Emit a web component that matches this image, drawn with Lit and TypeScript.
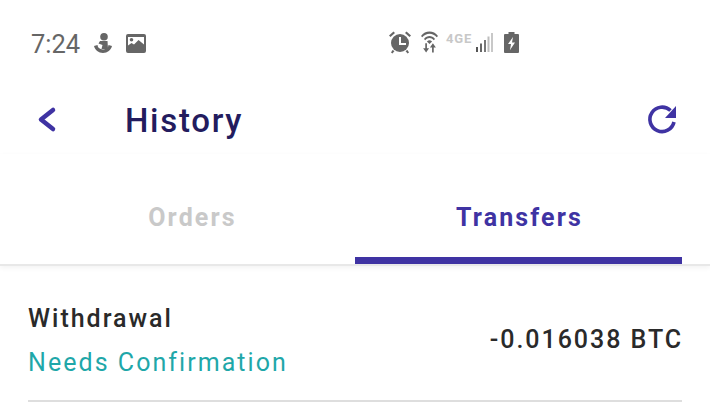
import { LitElement, html, css, unsafeCSS } from 'lit';
import { customElement, property } from 'lit/decorators.js';

const INDIGO = unsafeCSS('#3f33a3');

@customElement('status-bar')
export class StatusBar extends LitElement {
  static override styles = css`
    :host {
      display: flex;
      align-items: center;
      height: 86px;
      padding-left: 31px;
      color: #666;
      box-sizing: border-box;
    }
    .time {
      font: 400 25.5px/30px Roboto, sans-serif;
      width: 63px;
      padding-top: 1px;
    }
    svg {
      display: block;
      fill: currentColor;
    }
    .left {
      display: flex;
      align-items: center;
      gap: 14px;
    }
    .right {
      display: flex;
      align-items: center;
      margin: 0 0 2px 242px;
    }
    .wifi {
      margin: 0 0 2px 9px;
    }
    .net {
      font: 700 13px/12px Roboto, sans-serif;
      color: #c8c8c8;
      letter-spacing: 0.8px;
      width: 24px;
      margin: -6px 6px 0 8px;
    }
    .battery {
      margin-left: 11px;
    }
  `;

  override render() {
    return html`
      <span class="time">7:24</span>
      <div class="left">
        <svg width="18" height="20" viewBox="0 0 18 20">
          <circle cx="10" cy="3.800" r="3.800" />
          <path d="M6 8h7.500l.5 8H7.500l1-4-4-1.500z" />
          <path d="M0 13l3.500-1 .5 2c1 1.500 3 2.500 5 2.500s4-1 5-2.500l.5-2 3.500 1c-1 4-4.500 7-9 7s-8-3-9-7z" />
        </svg>
        <svg width="20" height="19" viewBox="0 0 20 19">
          <path fill-rule="evenodd" d="M2 0h16a2 2 0 0 1 2 2v15a2 2 0 0 1-2 2H2a2 2 0 0 1-2-2V2a2 2 0 0 1 2-2zm0 3v8.500l3.500-2.500 2.500 1.500 4.500-4.500 5.500 4.500V3zM5.500 4a1.800 1.800 0 1 1 0 3.600 1.800 1.800 0 0 1 0-3.600z" />
        </svg>
      </div>
      <div class="right">
        <svg width="24" height="24" viewBox="0 0 24 24">
          <circle cx="12" cy="13" r="9" />
          <path d="M1 5.500 5.500 1.500l1.500 1.500L2.500 7zM23 5.500 18.500 1.500 17 3l4.500 4zM4.500 20l2 1-2 2.500-1.500-1zM19.500 20l-2 1 2 2.500 1.500-1z" />
          <path d="M11 7h2v6h5v2h-7z" fill="#fff" />
        </svg>
        <svg class="wifi" width="17" height="23" viewBox="0 0 20 26">
          <path d="M0 6.500C5-.5 15-.5 20 6.500l-1.500 1.500C14 2.500 6 2.500 1.500 8z" />
          <path d="M3.500 10c4-4.500 9-4.500 13 0L15 11.500c-3-3.500-7-3.500-10 0z" />
          <path d="M7 13c2-2 4-2 6 0l-3 3z" />
          <path d="M5 15h2v6h2.500L6 26l-3.500-5H5zM14 15l3.500 5H15v6h-2v-6h-2.500z" />
        </svg>
        <span class="net">4GE</span>
        <svg width="17" height="19" viewBox="0 0 17 19">
          <rect x="0" y="14" width="2" height="5" fill="#555" />
          <rect x="4" y="10.500" width="2" height="8.500" fill="#666" />
          <rect x="8" y="7" width="2" height="12" fill="#777" />
          <rect x="11.500" y="3.500" width="2" height="15.500" fill="#bdbdbd" />
          <rect x="15" y="0" width="2" height="19" fill="#c8c8c8" />
        </svg>
        <svg class="battery" width="15" height="21" viewBox="0 0 15 21">
          <path fill-rule="evenodd" d="M4.500 0h6v2H14a1 1 0 0 1 1 1v17a1 1 0 0 1-1 1H1a1 1 0 0 1-1-1V3a1 1 0 0 1 1-1h3.500zM9 5 4 12h3l-1 6 5-7.500H8z" />
        </svg>
      </div>
    `;
  }
}

@customElement('app-bar')
export class AppBar extends LitElement {
  static override styles = css`
    :host {
      display: flex;
      align-items: center;
      height: 68px;
      padding: 0 33px 0 37px;
      color: ${INDIGO};
    }
    h1 {
      margin: 2px 0 0 68px;
      flex: 1;
      font: 500 33px/40px Roboto, sans-serif;
      letter-spacing: 1.7px;
      color: #231c5e;
    }
    svg {
      display: block;
    }
  `;

  override render() {
    return html`
      <svg width="20" height="28" viewBox="0 0 20 28" fill="none" stroke="currentColor" stroke-width="4.500" stroke-linecap="round" stroke-linejoin="round">
        <path d="M16 4 4 13.500 16 23" />
      </svg>
      <h1>History</h1>
      <svg width="32" height="32" viewBox="0 0 32 32">
        <path d="M25.500 6.500A12.200 12.200 0 1 0 29 18" fill="none" stroke="currentColor" stroke-width="3.600" />
        <path d="M31 2v12H20z" fill="currentColor" />
      </svg>
    `;
  }
}

@customElement('tab-strip')
export class TabStrip extends LitElement {
  static override styles = css`
    :host {
      display: grid;
      grid-template-columns: 1fr 1fr;
      height: 110px;
      padding: 0 28px;
      border-bottom: 2px solid #e8e8e8;
      box-shadow: 0 2px 5px rgba(0, 0, 0, 0.05);
      position: relative;
    }
    .tab {
      display: flex;
      flex-direction: column;
      align-items: center;
      font: 700 25px/30px Roboto, sans-serif;
      letter-spacing: 2.15px;
      color: #c9c9c9;
      padding: 49px 0 0 2px;
      box-sizing: border-box;
      height: 110px;
    }
    .tab.on {
      color: ${INDIGO};
      border-bottom: 7px solid currentColor;
    }
  `;

  override render() {
    return html`
      <div class="tab">Orders</div>
      <div class="tab on">Transfers</div>
    `;
  }
}

@customElement('transfer-row')
export class TransferRow extends LitElement {
  @property() kind = '';
  @property() status = '';
  @property() amount = '';

  static override styles = css`
    :host {
      display: flex;
      align-items: center;
      justify-content: space-between;
      margin: 0 28px;
      height: 136px;
      padding-top: 16px;
      border-bottom: 2px solid #dedede;
      box-sizing: border-box;
    }
    .kind {
      font: 500 25px/32px Roboto, sans-serif;
      letter-spacing: 2px;
      color: #2a2a2a;
    }
    .status {
      font: 400 25px/32px Roboto, sans-serif;
      letter-spacing: 2.05px;
      color: #1fa7a9;
      margin-top: 12px;
    }
    .amount {
      font: 500 25px/32px Roboto, sans-serif;
      letter-spacing: 1.95px;
      color: #2a2a2a;
      margin: -2px -1px 0 0;
    }
  `;

  override render() {
    return html`
      <div>
        <div class="kind">${this.kind}</div>
        <div class="status">${this.status}</div>
      </div>
      <div class="amount">${this.amount}</div>
    `;
  }
}

@customElement('app-root')
export class AppRoot extends LitElement {
  static override styles = css`
    :host {
      display: block;
      width: 710px;
      height: 402px;
      overflow: hidden;
      background: #fff;
    }
  `;

  override render() {
    return html`
      <status-bar></status-bar>
      <app-bar></app-bar>
      <tab-strip></tab-strip>
      <transfer-row
        kind="Withdrawal"
        status="Needs Confirmation"
        amount="-0.016038 BTC"
      ></transfer-row>
    `;
  }
}
